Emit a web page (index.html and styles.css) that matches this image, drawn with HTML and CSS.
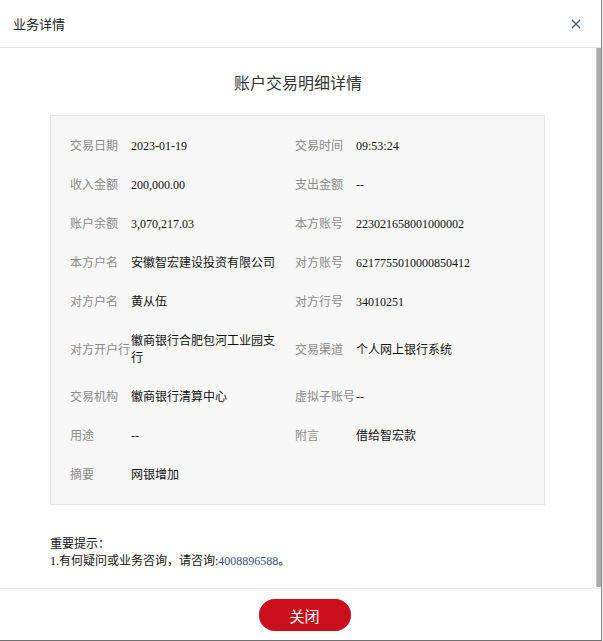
FILE: index.html
```html
<!DOCTYPE html>
<html lang="zh">
<head>
<meta charset="utf-8">
<title>业务详情</title>
<link rel="stylesheet" href="styles.css">
</head>
<body>
<div class="dialog">
  <div class="dlg-head">
    <span class="dlg-title">业务详情</span>
    <span class="dlg-close"><svg width="10" height="10" viewBox="0 0 10 10"><path d="M0.8 0.8 L9.2 9.2 M9.2 0.8 L0.8 9.2" stroke="#3d5d7e" stroke-width="1.3" fill="none"/></svg></span>
  </div>
  <div class="dlg-body">
    <div class="body-content">
      <h1 class="heading">账户交易明细详情</h1>
      <div class="detail-box">
        <div class="cell"><span class="lbl">交易日期</span><span class="val">2023-01-19</span></div>
        <div class="cell"><span class="lbl">交易时间</span><span class="val">09:53:24</span></div>
        <div class="cell"><span class="lbl">收入金额</span><span class="val">200,000.00</span></div>
        <div class="cell"><span class="lbl">支出金额</span><span class="val">--</span></div>
        <div class="cell"><span class="lbl">账户余额</span><span class="val">3,070,217.03</span></div>
        <div class="cell"><span class="lbl">本方账号</span><span class="val">223021658001000002</span></div>
        <div class="cell"><span class="lbl">本方户名</span><span class="val">安徽智宏建设投资有限公司</span></div>
        <div class="cell"><span class="lbl">对方账号</span><span class="val">6217755010000850412</span></div>
        <div class="cell"><span class="lbl">对方户名</span><span class="val">黄从伍</span></div>
        <div class="cell"><span class="lbl">对方行号</span><span class="val">34010251</span></div>
        <div class="cell"><span class="lbl">对方开户行</span><span class="val">徽商银行合肥包河工业园支行</span></div>
        <div class="cell"><span class="lbl">交易渠道</span><span class="val">个人网上银行系统</span></div>
        <div class="cell"><span class="lbl">交易机构</span><span class="val">徽商银行清算中心</span></div>
        <div class="cell"><span class="lbl">虚拟子账号</span><span class="val">--</span></div>
        <div class="cell"><span class="lbl">用途</span><span class="val">--</span></div>
        <div class="cell"><span class="lbl">附言</span><span class="val">借给智宏款</span></div>
        <div class="cell"><span class="lbl">摘要</span><span class="val">网银增加</span></div>
      </div>
      <div class="tips">
        <div>重要提示：</div>
        <div>1.有何疑问或业务咨询，请咨询:<span class="phone">4008896588</span>。</div>
      </div>
    </div>
    <div class="scrollbar"><div class="thumb"></div></div>
  </div>
  <div class="dlg-foot">
    <button class="btn-close">关闭</button>
  </div>
</div>
</body>
</html>
```

FILE: styles.css
```css
html, body {
  margin: 0;
  padding: 0;
  background: #e9e9e9;
}
body {
  font-family: "Liberation Serif", "Noto Sans CJK SC", serif;
  color: #111;
}
.dialog {
  width: 601px;
  height: 640px;
  background: #fff;
  border-right: 1px solid #8a8a8a;
  border-bottom: 1px solid #6f6f6f;
  display: flex;
  flex-direction: column;
}
.dlg-head {
  height: 47px;
  flex: none;
  border-bottom: 1px solid #e4e4e4;
  display: flex;
  align-items: center;
  justify-content: space-between;
  padding: 0 20px 0 13px;
}
.dlg-title {
  font-family: "Noto Sans CJK SC", sans-serif;
  font-size: 13px;
  color: #222;
}
.dlg-close {
  display: flex;
  width: 10px;
  height: 10px;
  margin-top: 1px;
}
.dlg-body {
  height: 540px;
  flex: none;
  display: flex;
  border-bottom: 1px solid #e4e4e4;
}
.body-content {
  flex: 1;
  min-width: 0;
  overflow: hidden;
}
.scrollbar {
  width: 5px;
  flex: none;
  display: flex;
  flex-direction: column;
}
.thumb {
  flex: 1;
  background: #ababab;
  border-left: 1px solid #c6c6c6;
  margin-bottom: 1px;
}
.heading {
  margin: 22px 0 21px;
  text-align: center;
  font-family: "Noto Sans CJK SC", sans-serif;
  font-weight: normal;
  font-size: 16px;
  line-height: 24px;
  color: #333;
}
.detail-box {
  margin: 0 51px 0 50px;
  background: #f7f7f7;
  border: 1px solid #e6e6e6;
  padding: 11px 0 9px 19px;
  display: grid;
  grid-template-columns: 225px 225px;
}
.cell {
  display: flex;
  align-items: center;
  padding: 11px 0;
  font-size: 12px;
  line-height: 17px;
}
.lbl {
  width: 61px;
  flex: none;
  color: #8a8a8a;
  white-space: nowrap;
}
.val {
  width: 150px;
  color: #111;
}
.tips {
  margin: 31px 50px 24px;
  font-size: 12px;
  line-height: 17px;
  color: #111;
}
.phone {
  color: #3a4f73;
}
.dlg-foot {
  flex: 1;
  display: flex;
  justify-content: center;
  align-items: flex-start;
  padding: 10px 0 0 8px;
}
.btn-close {
  width: 92px;
  height: 32px;
  border: none;
  border-radius: 16px;
  background: #c90f1b;
  color: #fff;
  font-family: "Noto Sans CJK SC", sans-serif;
  font-size: 15px;
  padding: 0;
  box-shadow: 0 0 1px rgba(0,0,0,0.4);
}
```
